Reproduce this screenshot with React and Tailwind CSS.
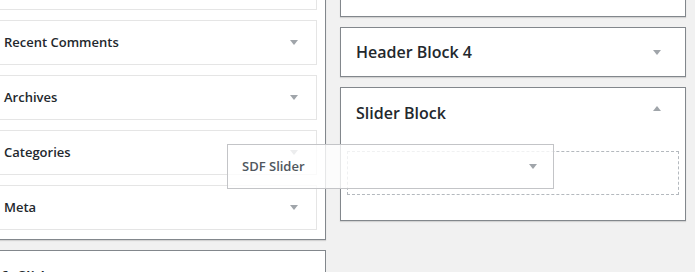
import React from 'react'

const font = { fontFamily: '"Open Sans", "Liberation Sans", sans-serif' }

function Arrow({ up = false, className = '' }) {
  return (
    <svg width="8" height="5" viewBox="0 0 8 5" className={className}>
      <path d={up ? 'M0 5 L4 0 L8 5 Z' : 'M0 0 L8 0 L4 5 Z'} fill="#a0a5aa" />
    </svg>
  )
}

function SmallWidget({ title, hideTitle }) {
  return (
    <div className="h-[45px] bg-white border border-[#e5e5e5] flex items-center justify-between pl-[14px] pr-[18px]">
      <span className="text-[13px] font-semibold text-[#23282d]">{hideTitle ? '' : title}</span>
      <Arrow />
    </div>
  )
}

export default function App() {
  return (
    <div className="relative w-[695px] h-[272px] overflow-hidden bg-[#f1f1f1]" style={font}>
      <div className="flex">
        {/* left column */}
        <div className="ml-[-12px] w-[338px] shrink-0 flex flex-col">
          <div className="mt-[-35px] bg-white border-r border-b border-[#82878c] shadow-[0_1px_1px_rgba(0,0,0,0.12)] pl-[1px] pr-[8px] pb-[9px] flex flex-col gap-[10px]">
            <SmallWidget title="Text" hideTitle />
            <SmallWidget title="Recent Comments" />
            <SmallWidget title="Archives" />
            <SmallWidget title="Categories" />
            <SmallWidget title="Meta" />
          </div>
          <div className="mt-[10px] h-[40px] bg-white border-t border-r border-[#82878c] pl-[11px] pt-[14px]">
            <span className="text-[16px] font-semibold text-[#23282d] ml-[-16px]">Left Slider</span>
          </div>
        </div>

        {/* right column */}
        <div className="ml-[14px] w-[346px] shrink-0 flex flex-col gap-[10px] mt-[-33px]">
          <div className="h-[50px] bg-white border border-[#82878c] shadow-[0_1px_1px_rgba(0,0,0,0.12)]" />
          <div className="h-[50px] bg-white border border-[#82878c] shadow-[0_1px_1px_rgba(0,0,0,0.12)] flex items-center justify-between pl-[15px] pr-[24px]">
            <span className="text-[16px] font-semibold text-[#23282d]">Header Block 4</span>
            <Arrow />
          </div>
          <div className="h-[134px] bg-white border border-[#82878c] shadow-[0_1px_1px_rgba(0,0,0,0.12)] flex flex-col">
            <div className="h-[50px] flex items-center justify-between pl-[15px] pr-[24px]">
              <span className="text-[16px] font-semibold text-[#23282d]">Slider Block</span>
              <Arrow up className="mt-[-10px]" />
            </div>
            <div className="mt-[13px] mx-[6px] h-[44px] border border-dashed border-[#b4b9be]" />
          </div>
        </div>
      </div>

      {/* widget being dragged */}
      <div className="absolute left-[227px] top-[144px] w-[327px] h-[45px] bg-white/80 border border-[#c3c4c7] flex items-center justify-between pl-[14px] pr-[16px]">
        <span className="text-[13px] font-semibold text-[#50575e]">SDF Slider</span>
        <Arrow />
      </div>
    </div>
  )
}
